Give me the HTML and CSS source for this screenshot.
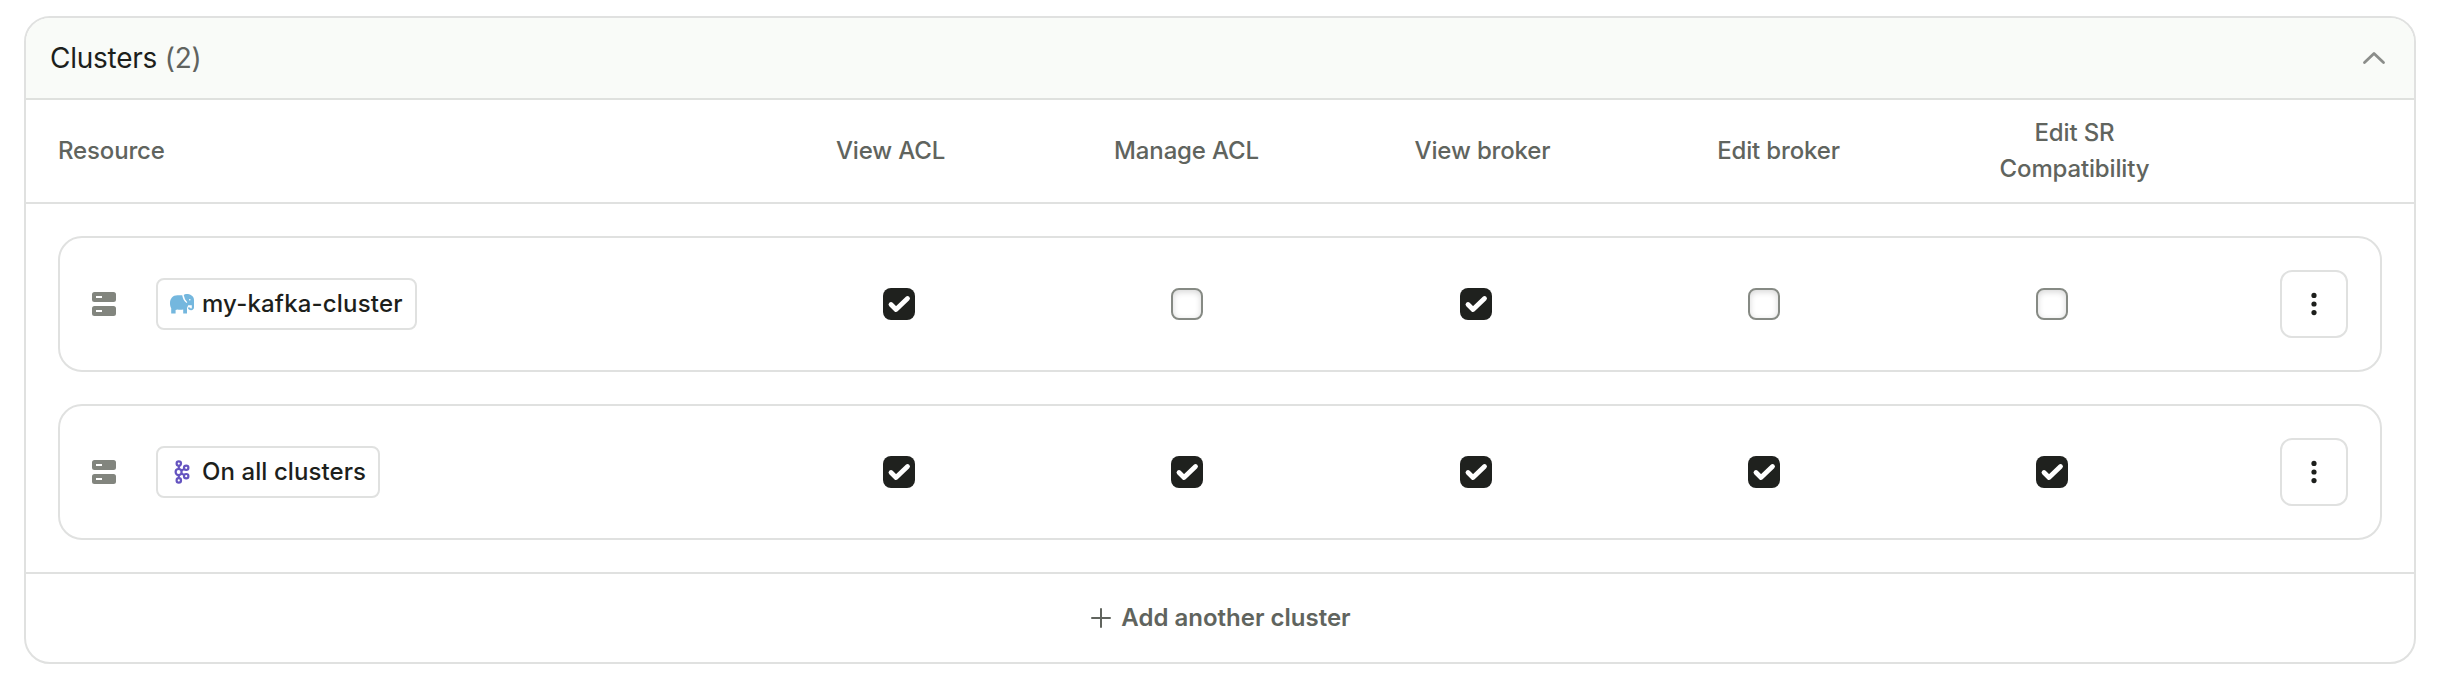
FILE: index.html
```
<!DOCTYPE html>
<html lang="en">
<head>
<meta charset="utf-8">
<title>Clusters</title>
<link rel="stylesheet" href="styles.css">
</head>
<body>
<svg class="defs" aria-hidden="true">
  <symbol id="server" viewBox="0 0 24 24">
    <path fill-rule="evenodd" d="M2.500 0h19A2.500 2.500 0 0 1 24 2.500v5a2.500 2.500 0 0 1-2.500 2.500h-19A2.500 2.500 0 0 1 0 7.500v-5A2.500 2.500 0 0 1 2.500 0zM4 4v2h6V4zM2.500 14h19a2.500 2.500 0 0 1 2.500 2.500v5a2.500 2.500 0 0 1-2.500 2.500h-19A2.500 2.500 0 0 1 0 21.500v-5A2.500 2.500 0 0 1 2.500 14zM4 18v2h6v-2z"/>
  </symbol>
  <symbol id="check" viewBox="0 0 32 32">
    <path d="M8 16.500L13 21.500L24.500 10.500" fill="none" stroke="#fff" stroke-width="4.800" stroke-linecap="round" stroke-linejoin="round"/>
  </symbol>
  <symbol id="dots" viewBox="0 0 24 24">
    <circle cx="12" cy="3.400" r="2.600"/><circle cx="12" cy="12" r="2.600"/><circle cx="12" cy="20.600" r="2.600"/>
  </symbol>
</svg>
<section class="card">
  <header class="card-header">
    <h2 class="title">Clusters <span class="count">(2)</span></h2>
    <svg class="chevron" viewBox="0 0 24 14"><path d="M2.500 11.500L12 2.500l9.500 9"/></svg>
  </header>
  <div class="columns">
    <div class="col-resource">Resource</div>
    <div>View ACL</div>
    <div>Manage ACL</div>
    <div>View broker</div>
    <div>Edit broker</div>
    <div>Edit SR<br>Compatibility</div>
  </div>
  <div class="rows">
    <div class="row">
      <div class="resource">
        <svg class="server"><use href="#server"/></svg>
        <div class="chip">
          <svg class="chip-icon" viewBox="0 0 24 24">
            <path fill="#74b7de" d="M7.500 3.200H12.200c.6 3.200 1.800 6 4.400 7.800l.7-.8-2.300-3-1.300-4.300C14.800 2.500 15.500 2 16.500 2c3.500 0 7.500 1.900 7.500 6v7.300c0 1.700-1.100 2.900-2.900 2.900-1.800 0-3.100-.9-3.200-2.700h2.200c.1.700.4 1 .9 1 .6 0 .8-.4.800-1.100v-2.200h-3.600L17 16v5.600h-3.800v-4.200c-1.500.6-4.300.6-5.700.1L5.600 18v3.600H1.200v-5.400C.3 14.800 0 13 0 11c0-4.400 2.700-7.800 7.500-7.800z"/>
            <circle cx="19.800" cy="7.800" r=".8" fill="#fff"/>
          </svg>
          <span class="name-kafka">my-kafka-cluster</span>
        </div>
      </div>
      <div class="cell"><span class="box checked"><svg><use href="#check"/></svg></span></div>
      <div class="cell"><span class="box"></span></div>
      <div class="cell"><span class="box checked"><svg><use href="#check"/></svg></span></div>
      <div class="cell"><span class="box"></span></div>
      <div class="cell"><span class="box"></span></div>
      <button class="menu" aria-label="More"><svg><use href="#dots"/></svg></button>
    </div>
    <div class="row">
      <div class="resource">
        <svg class="server"><use href="#server"/></svg>
        <div class="chip">
          <svg class="chip-icon" viewBox="0 0 24 24">
            <g fill="none" stroke="#6554c0" stroke-width="2.200">
              <path d="M8.800 6v3M8.800 15v3M11.600 10.400l2.400-1.300M11.600 13.600l2.400 1.300"/>
              <circle cx="8.800" cy="3.600" r="2.200"/><circle cx="8.600" cy="12" r="3"/><circle cx="8.800" cy="20.400" r="2.200"/>
              <circle cx="16.200" cy="7.800" r="2.200"/><circle cx="16.200" cy="16.200" r="2.200"/>
            </g>
          </svg>
          <span class="name-all">On all clusters</span>
        </div>
      </div>
      <div class="cell"><span class="box checked"><svg><use href="#check"/></svg></span></div>
      <div class="cell"><span class="box checked"><svg><use href="#check"/></svg></span></div>
      <div class="cell"><span class="box checked"><svg><use href="#check"/></svg></span></div>
      <div class="cell"><span class="box checked"><svg><use href="#check"/></svg></span></div>
      <div class="cell"><span class="box checked"><svg><use href="#check"/></svg></span></div>
      <button class="menu" aria-label="More"><svg><use href="#dots"/></svg></button>
    </div>
  </div>
  <footer class="card-footer">
    <svg class="plus" viewBox="0 0 20 20"><path d="M10 1v18M1 10h18"/></svg>
    <span>Add another cluster</span>
  </footer>
</section>
</body>
</html>
```
FILE: styles.css
```
* { box-sizing: border-box; }
body {
  margin: 0;
  padding: 16px 26px 0 24px;
  background: #fff;
  color: #1d1f1c;
  font: 500 24px/36px Inter, "Liberation Sans", sans-serif;
}
svg { display: block; }
.defs { display: none; }
.card {
  height: 648px;
  border: 2px solid #e0e1e0;
  border-radius: 26px;
  overflow: hidden;
  background: #fff;
}
.card-header {
  height: 82px;
  padding: 0 28px 1px 24px;
  display: flex;
  align-items: center;
  justify-content: space-between;
  background: #f9fbf8;
  border-bottom: 2px solid #dfe1de;
}
.title { margin: 0; padding-top: 1px; font-size: 28px; font-weight: 400; letter-spacing: -0.25px; white-space: nowrap; }
.count { color: #60635f; }
.chevron { width: 24px; height: 14px; fill: none; stroke: #8b8d8a; stroke-width: 2.8; stroke-linecap: round; stroke-linejoin: round; }
.columns {
  height: 104px;
  display: grid;
  grid-template-columns: 684.5px repeat(5, 296px);
  padding: 0 0 1px 32px;
  align-items: center;
  text-align: center;
  color: #60645e;
  letter-spacing: -0.15px;
  border-bottom: 2px solid #e0e1e0;
}
.col-resource { text-align: left; }
.rows { padding: 32px; display: flex; flex-direction: column; gap: 32px; }
.row {
  height: 136px;
  padding: 0 32px;
  display: grid;
  grid-template-columns: 663px repeat(5, 288.25px) 1fr;
  align-items: center;
  border: 2px solid #e0e1e0;
  border-radius: 24px;
}
.resource { display: flex; align-items: center; gap: 40px; }
.server { width: 24px; height: 24px; fill: #82857e; }
.chip {
  height: 52px;
  padding: 0 12px;
  display: flex;
  align-items: center;
  gap: 8px;
  border: 2px solid #e0e1e0;
  border-radius: 8px;
  white-space: nowrap;
}
.name-kafka { letter-spacing: 0.18px; }
.name-all { letter-spacing: 0.08px; }
.chip-icon { width: 24px; height: 24px; }
.cell { display: flex; justify-content: center; }
.box {
  width: 32px;
  height: 32px;
  border: 2px solid #868a84;
  border-radius: 8px;
  background: #fff;
  box-shadow: inset 0 2px 6px rgba(0, 0, 0, 0.16);
}
.box.checked { border: 0; background: #1f211e; box-shadow: none; }
.box svg { width: 32px; height: 32px; }
.menu {
  width: 68px;
  height: 68px;
  padding: 0;
  justify-self: end;
  display: grid;
  place-items: center;
  background: #fff;
  border: 2px solid #e0e1e0;
  border-radius: 12px;
}
.menu svg { width: 24px; height: 24px; fill: #1d1f1c; }
.card-footer {
  height: 90px;
  padding-left: 2px;
  display: flex;
  align-items: center;
  justify-content: center;
  gap: 10px;
  border-top: 2px solid #e0e1e0;
  color: #60645e;
  font-weight: 600;
}
.plus { width: 20px; height: 20px; fill: none; stroke: #60645e; stroke-width: 2; stroke-linecap: round; }
```
